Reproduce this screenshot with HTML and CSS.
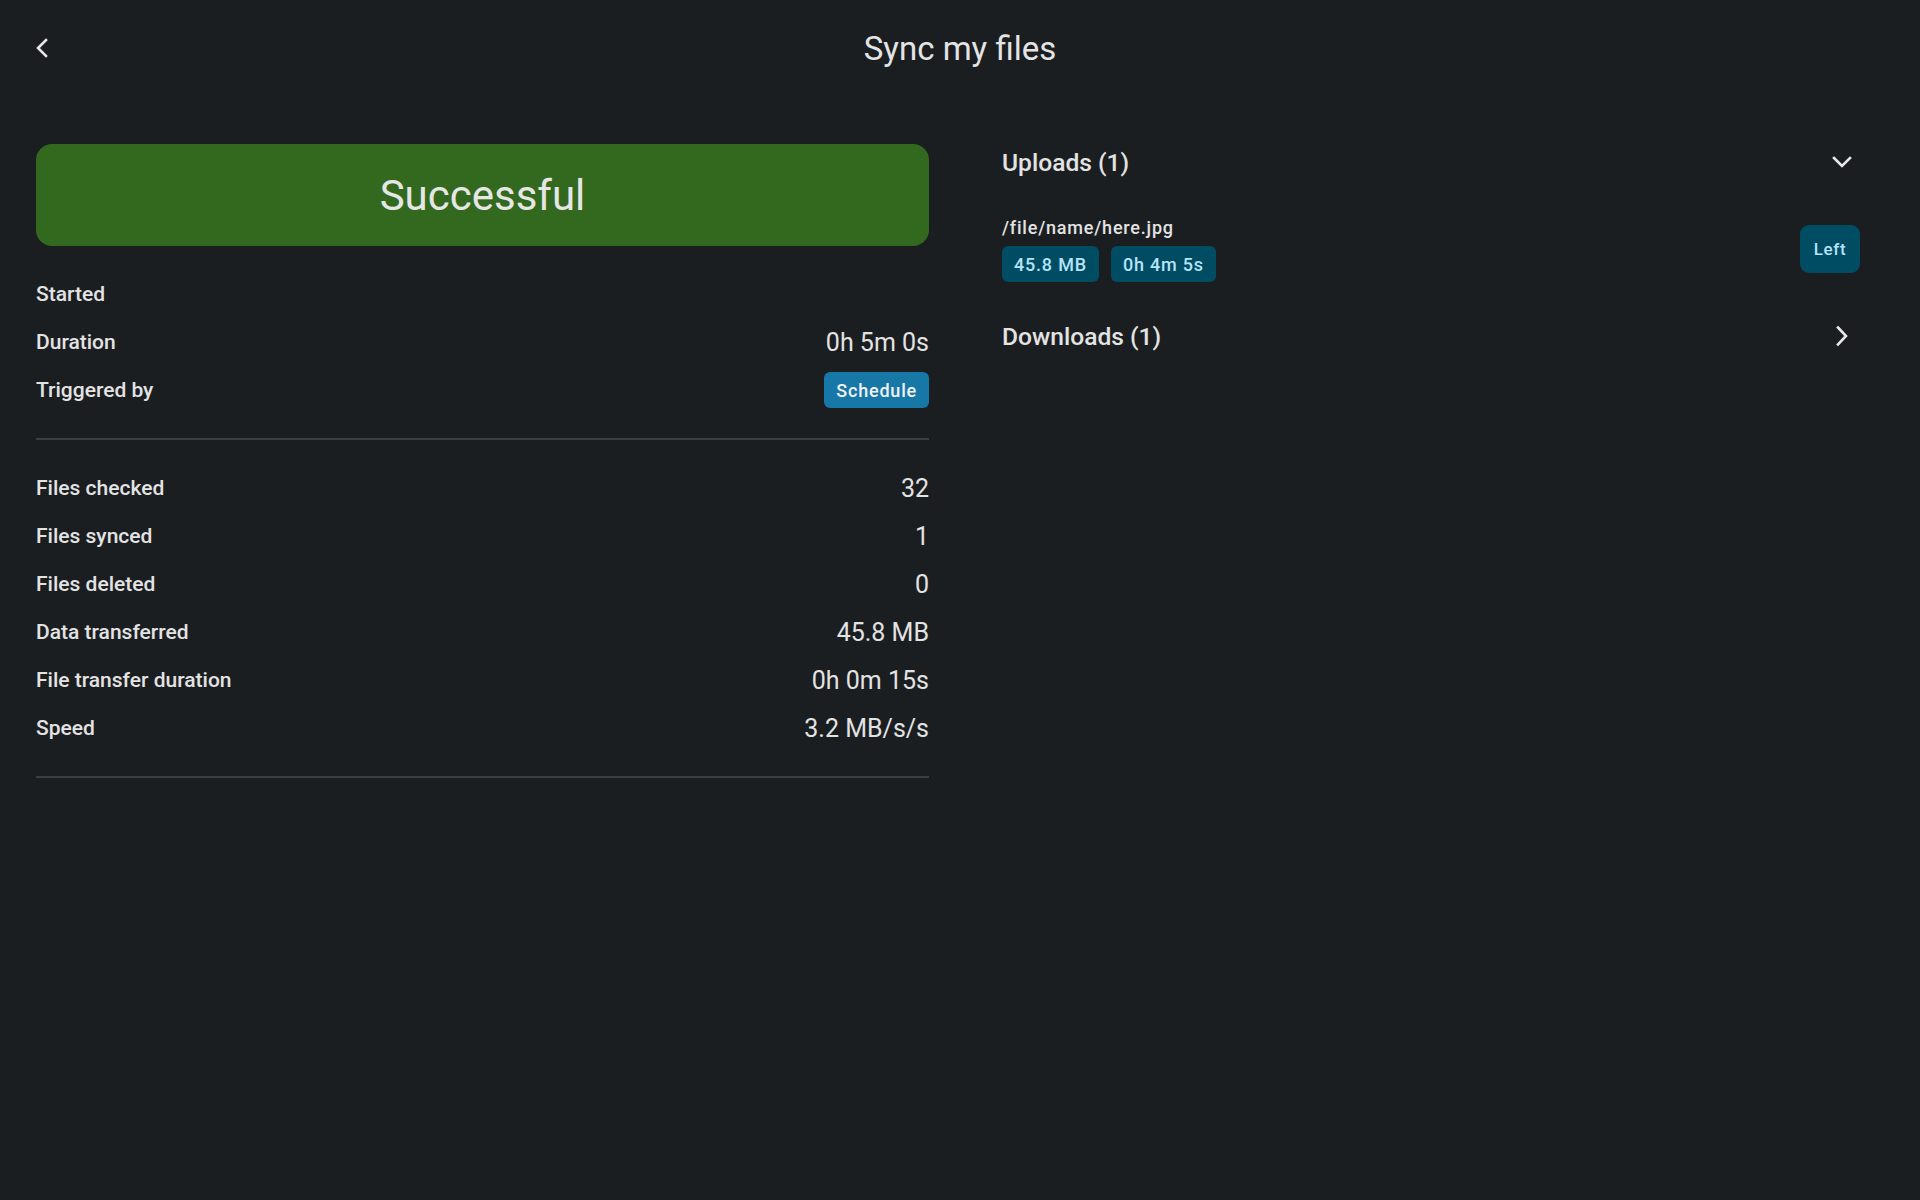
FILE: index.html
```html
<!DOCTYPE html>
<html lang="en">

<head>
    <meta charset="UTF-8">
    <meta name="viewport" content="width=device-width, initial-scale=1.0">
    <title>Sync my files</title>
    <link rel="stylesheet" href="styles.css">
</head>

<body>
    <header class="topbar">
        <button class="icon_btn back_btn" aria-label="Back">
            <svg width="20" height="24" viewBox="0 0 20 24">
                <polyline points="14,4 6,12 14,20" />
            </svg>
        </button>
        <h1 class="title">Sync my files</h1>
    </header>

    <main class="content">
        <section class="summary">
            <div class="status status_ok">Successful</div>

            <div class="rows">
                <div class="row"><span class="label">Started</span><span class="value"></span></div>
                <div class="row"><span class="label">Duration</span><span class="value">0h 5m 0s</span></div>
                <div class="row"><span class="label">Triggered by</span><span class="badge">Schedule</span></div>
            </div>

            <hr class="divider">

            <div class="rows">
                <div class="row"><span class="label">Files checked</span><span class="value">32</span></div>
                <div class="row"><span class="label">Files synced</span><span class="value">1</span></div>
                <div class="row"><span class="label">Files deleted</span><span class="value">0</span></div>
                <div class="row"><span class="label">Data transferred</span><span class="value">45.8 MB</span></div>
                <div class="row"><span class="label">File transfer duration</span><span class="value">0h 0m 15s</span></div>
                <div class="row"><span class="label">Speed</span><span class="value">3.2 MB/s/s</span></div>
            </div>

            <hr class="divider">
        </section>

        <section class="transfers">
            <div class="group">
                <div class="group_head">
                    <span>Uploads (1)</span>
                    <svg class="chev" width="24" height="24" viewBox="0 0 24 24">
                        <polyline points="4,8 12,16 20,8" />
                    </svg>
                </div>
                <div class="file_item">
                    <div class="file_info">
                        <div class="file_path">/file/name/here.jpg</div>
                        <div class="chips">
                            <span class="chip">45.8 MB</span>
                            <span class="chip">0h 4m 5s</span>
                        </div>
                    </div>
                    <span class="side_btn">Left</span>
                </div>
            </div>

            <div class="group">
                <div class="group_head">
                    <span>Downloads (1)</span>
                    <svg class="chev" width="24" height="24" viewBox="0 0 24 24">
                        <polyline points="8,3.5 16,12 8,20.5" />
                    </svg>
                </div>
            </div>
        </section>
    </main>
</body>

</html>
```

FILE: styles.css
```css
body {
    font-family: Roboto, 'Liberation Sans', sans-serif;
    background-color: #1b1e21;
    color: #e2e2e2;
    margin: 0;
    height: 100vh;
}

.topbar {
    height: 96px;
    display: flex;
    align-items: center;
    justify-content: center;
    position: relative;
}

.icon_btn {
    background: none;
    border: none;
    padding: 0;
    cursor: pointer;
}

.back_btn {
    position: absolute;
    left: 30px;
    top: 36px;
    width: 24px;
    height: 24px;
    display: flex;
    align-items: center;
    justify-content: center;
}

.back_btn polyline,
.chev polyline {
    fill: none;
    stroke: #e8e8e8;
    stroke-width: 2.6;
    stroke-linecap: square;
}

.title {
    margin: 0;
    font-size: 33px;
    font-weight: 400;
    color: #e4e4e4;
}

.content {
    display: grid;
    grid-template-columns: 893px 1fr;
    column-gap: 73px;
    padding: 48px 60px 0 36px;
}

.status {
    height: 102px;
    border-radius: 16px;
    display: flex;
    align-items: center;
    justify-content: center;
    font-size: 42px;
    font-weight: 400;
    color: #e6e6e6;
}

.status_ok {
    background-color: #33691e;
}

.rows {
    padding: 24px 0;
}

.row {
    height: 48px;
    display: flex;
    align-items: center;
    justify-content: space-between;
}

.label {
    font-size: 21px;
    font-weight: 500;
    color: #e3e3e3;
}

.value {
    font-size: 25px;
    font-weight: 400;
    color: #e3e3e3;
}

.badge {
    background-color: #1777a7;
    color: #f2f2f2;
    font-size: 18px;
    font-weight: 500;
    letter-spacing: 0.8px;
    height: 36px;
    padding: 0 12px;
    border-radius: 6px;
    display: flex;
    align-items: center;
}

.divider {
    border: none;
    border-top: 2px solid #3b3e42;
    margin: 0;
}

.transfers {
    display: flex;
    flex-direction: column;
    gap: 36px;
}

.group {
    display: flex;
    flex-direction: column;
    gap: 36px;
}

.group_head {
    height: 36px;
    display: flex;
    align-items: center;
    justify-content: space-between;
    font-size: 24.6px;
    font-weight: 500;
    color: #e3e3e3;
    padding-right: 6px;
}

.file_item {
    display: flex;
    align-items: center;
    justify-content: space-between;
}

.file_info {
    display: flex;
    flex-direction: column;
    gap: 6px;
}

.file_path {
    font-size: 18px;
    font-weight: 500;
    letter-spacing: 0.8px;
    line-height: 24px;
    color: #e3e3e3;
}

.chips {
    display: flex;
    gap: 12px;
}

.chip {
    background-color: #004c63;
    color: #b6e3f8;
    font-size: 18px;
    font-weight: 500;
    letter-spacing: 0.8px;
    height: 36px;
    padding: 0 12px;
    border-radius: 6px;
    display: flex;
    align-items: center;
}

.side_btn {
    background-color: #004c63;
    color: #b6e3f8;
    font-size: 17px;
    font-weight: 500;
    letter-spacing: 0.6px;
    width: 60px;
    height: 48px;
    border-radius: 9px;
    display: flex;
    align-items: center;
    justify-content: center;
}
```
